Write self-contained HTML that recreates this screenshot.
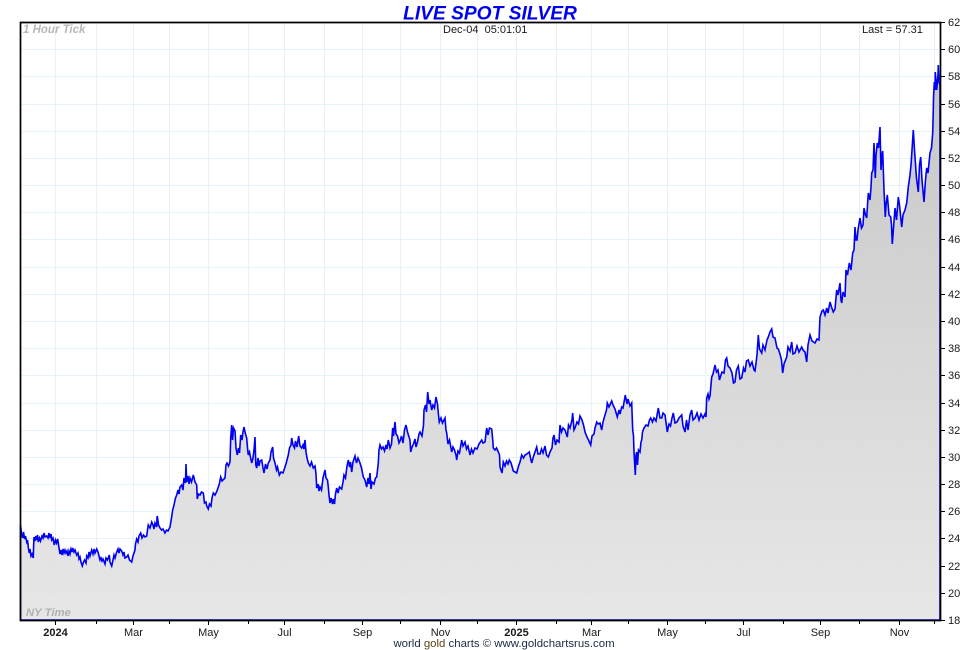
<!DOCTYPE html>
<html><head><meta charset="utf-8"><title>Live Spot Silver</title>
<style>
html,body{margin:0;padding:0;background:#fff}
svg{display:block}
text{font-family:"Liberation Sans",sans-serif;font-size:11px;fill:#1a1a1a}
.y text{text-anchor:start}
.x text{text-anchor:middle}
</style></head><body>
<svg width="980" height="650" viewBox="0 0 980 650" xmlns="http://www.w3.org/2000/svg">
<defs>
<linearGradient id="g" gradientUnits="userSpaceOnUse" x1="0" y1="60" x2="0" y2="620">
<stop offset="0" stop-color="#c2c2c2"/><stop offset=".5" stop-color="#d4d4d4"/><stop offset="1" stop-color="#e5e5e5"/>
</linearGradient>
</defs>
<rect width="980" height="650" fill="#fff"/>
<g stroke="#e6f2fa" stroke-width="1" shape-rendering="crispEdges" fill="none">
<path d="M21 49.5H940M21 76.5H940M21 104.5H940M21 131.5H940M21 158.5H940M21 185.5H940M21 212.5H940M21 239.5H940M21 267.5H940M21 294.5H940M21 321.5H940M21 348.5H940M21 375.5H940M21 403.5H940M21 430.5H940M21 457.5H940M21 484.5H940M21 511.5H940M21 538.5H940M21 566.5H940M21 593.5H940"/>
<path d="M55.5 23V620M96.5 23V620M133.5 23V620M169.5 23V620M208.5 23V620M248.5 23V620M284.5 23V620M324.5 23V620M362.5 23V620M400.5 23V620M440.5 23V620M477.5 23V620M516.5 23V620M556.5 23V620M591.5 23V620M628.5 23V620M667.5 23V620M705.5 23V620M743.5 23V620M783.5 23V620M820.5 23V620M859.5 23V620M899.5 23V620M934.5 23V620"/>
</g>
<path fill="url(#g)" fill-opacity=".93" stroke="#0000f5" stroke-width="1.6" stroke-linejoin="miter" d="M20.5 620L20.5 525 21.5 533 22.7 538 23.5 532 24.6 539 25.5 536 26.7 542 27.5 540 28.4 548 29.3 553 30 549 31 556 32 554 33.3 558 33.6 546 34 537 35 541 36 536 36.7 540 37.5 535 38.3 542 39.5 538 40.5 541 42 536 43 538 44 533 45 537 46.7 536 48 538 49 533 50 538 51 534 51.7 540 53 538 54.3 545 55.5 540 56.5 543 57.7 539 59 548 60 554 61 550 62 555 63 549 64 553 65 550 66 553 67 551 68 556 69 551 70 554 71 549 72 552 72.7 548 74 552 75 550 76.7 555 78 553 79 559 80 557 81 562 82.3 566 83.5 562 84.5 560 86 563 86.7 556 88 558 89 552 90 556 91.7 550 93 554 94 549 95 553 96.7 549 98 552 99 556 100 560 101 558 102 561 103 559 105 564 106 558 107.5 560 109.3 555 110 562 111.7 566 113 560 114 555 115 558 116.7 552 118 549 119 553 120 549 121.7 551 123 555 124 552 125 558 126.7 557 128 555 129.5 560 131.7 562 133 556 135 550 135.5 544 136.7 539 138 542 139 536 140.7 533 142 538 143.5 535 145 537 146.7 536 147.5 530 148.3 525 150 528 151.7 522 153 525 154 529 155 523 156.7 527 157 518 157.3 516 158.5 525 160 528 161.5 530 163 529 165 533 166.5 530 168 531 170 527 171.5 518 172.7 510 174 505 175.5 498 176.7 495 178 490 179 494 180 487 181.7 485 183 490 184 478 185.5 483 186 464 186.7 482 188 476 189 484 190 478 191.5 482 193.3 475 195 482 196.7 485 197.3 499 198.5 494 200 495 201.5 492 203.3 493 204.5 503 206 502 206.7 506 208.3 509 209.5 504 211 506 212 498 213.3 493 215 495 216.5 492 218 488 219.3 484 220.7 477 222 481 224 479 225 478 226 465 227 463 228.5 466 230 462 230.7 438 231.7 425 232.5 440 233.5 428 235 431 236 448 237.3 455 238.5 448 239.5 453 240.7 435 242 440 243 432 244 427 245.5 434 246.7 438 247.5 448 248.3 455 249.5 452 251 460 251.7 463 253 458 254 450 255 437 255.8 465 256.7 468 258 458 259 466 260 461 261.7 460 263 468 264 473 265.5 464 267 469 268.3 463 270 460 271 452 272.7 447 273.5 458 275 463 276.5 470 277.5 467 279.3 475 281 472 283 473 285 467 286.5 462 288.3 455 289.5 448 291 445 291.7 438 293 445 294.5 448 295.5 441 297 447 298.7 436 300 446 301.7 448 303 445 304 449 305 440 306 452 307 458 308.3 463 310 466 311.5 462 313.3 468 315 466 316 474 316.7 488 318 484 319 491 320 487 321.5 490 323 478 325 470 326 478 327.5 480 328.3 487 329 495 330 503 331 498 332.5 504 333.3 499 334.5 504 335.5 494 336.7 488 338 493 339.5 487 341.7 489 343 482 344 475 345.5 478 347 466 348.3 460 349.5 467 350.5 462 351.7 472 353 462 355 456 356.5 463 358 458 360 463 361.5 468 363.3 477 365 480 366.7 487 368 478 369 484 370 473 371 489 372 482 374 484 375.5 478 376.7 477 377.5 470 378.3 463 379 450 380 445 381.5 449 383 447 384.5 451 386 445 387 449 388.3 440 390 448 391.5 444 392.7 428 393.5 436 395 422 396 434 397.5 436 399 443 400 441 401.5 436 403 443 404.5 430 406 425 407.5 432 409 437 410 440 410.7 452 412 447 413.5 444 415 439 416 447 417.5 442 419 434 420 432 422 436 423.5 425 424 410 425.5 405 426.5 412 427.7 392 429 404 430 400 431.7 410 433 405 434.5 408 436 397 437.5 404 438.5 415 439.3 422 441 418 442.5 423 445 418 446 430 446.7 433 448 444 449.5 440 451.7 452 453 447 454.5 450 456 455 456.7 460 458 451 459.5 453 461.7 440 463 446 465 442 466.5 449 468 446 470 455 471.5 449 473 453 475 448 477 449 479 444 481.7 440 483 443 485 442 486.7 428 488 435 489.5 428 491.7 429 493 443 493.3 448 495 450 496.5 448 498.3 452 499.5 455 500 467 501 470 502 473 503.3 462 505 466 506.5 461 508 464 509.3 460 511 463 512.5 468 513.3 471 515 472 516.7 473 518.5 466 520 462 521.7 455 523.5 458 525 455 527 454 529.3 452 530.5 458 531.7 463 533 458 535 452 536.7 447 538 454 540 454 541.5 449 543 453 545 446 546.5 455 548.3 457 550 452 552 448 553 438 554 435 555.5 445 557 440 559 442 560 425 561.5 432 563 428 565 430 567.3 437 568.5 425 570 428 572 420 572.7 413 574 430 575 428 577 422 578.5 424 580 416 582 420 583.5 425 585 432 587 437 588.5 440 590.7 445 592 436 594 434 595 428 596.7 422 598 424 600 423 601.7 430 603 422 605 415 606.5 410 607.3 403 609 407 611.7 401 613 405 615 409 617.3 417 619 410 620 414 621.7 407 623 408 625.3 395 627 404 628 399 630 406 631.7 403 632.7 430 633.5 436 634 452 635.3 475 636 455 636.7 452 637.5 465 638.5 450 640 452 641 442 641.7 440 642.5 432 644 428 646 425 648 426 649.5 420 650.7 418 652.5 422 654 418 656 421 658.3 408 660 418 661.7 418 663 413 665 415 667.3 432 669 424 670.5 426 672 418 673.3 413 675 423 677 422 679 418 681.7 415 683 426 685 432 686.5 420 688 430 690 415 691.7 410 693 420 695 418 697 413 699 420 701 414 703 418 705 414 706 417 706.7 398 708 394 709 399 710 396 711.7 377 713 374 715 365 716.5 372 718 370 719.5 380 720 378 722 372 724 373 725.5 360 726.7 358 728 366 730 368 732 373 733.5 383 735 382 736.5 370 738.3 366 740 379 741.7 378 743.5 368 745 372 746.5 361 748.3 360 750 366 752 362 754 370 755 371 757 355 758.3 335 759.5 349 761.7 353 763 345 765 350 767 340 768.3 337 770 332 771.7 329 773 337 775 338 777 348 778.3 349 780 354 781.5 360 782.7 373 784 364 786.7 357 788 347 790 351 791.7 342 793 354 795 353 797 346 799 352 801.7 347 803 350 805 352 806.7 362 808 345 810 335 812 341 815 343 817 339 819 340 820 317 822 311 823.3 310 825 315 826.7 308 828 313 830 302 831.5 307 833.3 312 835 309 836.7 290 838 295 840 283 841 300 841.7 303 843 292 845 297 846 270 847.5 275 849.3 263 851 270 852.7 253 854 250 855 227 856 240 857 240 858 230 860 218 861.5 228 863 225 864 208 865.5 215 866.7 218 867.5 205 868.3 193 870 200 871 187 871.7 173 873 170 874 143 875.3 178 876 155 877.3 143 878.5 148 880 127 881 170 882 155 882.7 151 884 190 885.3 217 886 205 887.3 195 889 215 890.7 217 891.5 225 892.3 244 893.5 228 895 208 896.5 220 898.3 197 899.5 205 901 220 901.7 227 903 215 905 210 906.7 203 908.3 187 910 175 911 165 912 150 913.3 130 914.5 150 915 157 916.5 178 918.3 192 919.5 165 920.7 157 922 180 924 202 925.5 180 926.7 168 928 173 930 153 931.5 148 932.7 133 933.3 110 933.5 98 934.3 82 935 90 935.3 72 936.7 90 938 75 938.3 65 939 82 940 85 940 620Z"/>
<g fill="none" stroke="#000" stroke-width="1" shape-rendering="crispEdges">
<path d="M940 22.5H945M940 49.5H945M940 76.5H945M940 104.5H945M940 131.5H945M940 158.5H945M940 185.5H945M940 212.5H945M940 239.5H945M940 267.5H945M940 294.5H945M940 321.5H945M940 348.5H945M940 375.5H945M940 403.5H945M940 430.5H945M940 457.5H945M940 484.5H945M940 511.5H945M940 538.5H945M940 566.5H945M940 593.5H945M940 620.5H945"/>
<path d="M55.5 620V625M96.5 620V624M133.5 620V625M169.5 620V624M208.5 620V625M248.5 620V624M284.5 620V625M324.5 620V624M362.5 620V625M400.5 620V624M440.5 620V625M477.5 620V624M516.5 620V625M556.5 620V624M591.5 620V625M628.5 620V624M667.5 620V625M705.5 620V624M743.5 620V625M783.5 620V624M820.5 620V625M859.5 620V624M899.5 620V625M934.5 620V624"/>
</g>
<path fill="none" stroke="#000" stroke-width="1.7" d="M20.5 620.5V22.5H940.5V620.5H20.5Z"/>
<text x="490" y="19.5" text-anchor="middle" style="font-size:19.2px;font-weight:bold;font-style:italic;fill:#0000f0">LIVE SPOT SILVER</text>
<text x="443" y="33" style="white-space:pre">Dec-04  05:01:01</text>
<text x="862" y="33">Last = 57.31</text>
<text x="23" y="33" style="font-size:11.5px;font-weight:bold;font-style:italic;fill:#b8b8b8">1 Hour Tick</text>
<text x="26" y="616" style="font-size:11.3px;font-weight:bold;font-style:italic;fill:#b0b0b0">NY Time</text>
<g class="y">
<text x="948" y="26">62</text><text x="948" y="53">60</text><text x="948" y="80">58</text><text x="948" y="108">56</text><text x="948" y="135">54</text><text x="948" y="162">52</text><text x="948" y="189">50</text><text x="948" y="216">48</text><text x="948" y="243">46</text><text x="948" y="271">44</text><text x="948" y="298">42</text><text x="948" y="325">40</text><text x="948" y="352">38</text><text x="948" y="379">36</text><text x="948" y="407">34</text><text x="948" y="434">32</text><text x="948" y="461">30</text><text x="948" y="488">28</text><text x="948" y="515">26</text><text x="948" y="542">24</text><text x="948" y="570">22</text><text x="948" y="597">20</text><text x="948" y="624">18</text>
</g>
<g class="x">
<text x="55.5" y="636" font-weight="bold">2024</text><text x="133.5" y="636">Mar</text><text x="208.5" y="636">May</text><text x="284.5" y="636">Jul</text><text x="362.5" y="636">Sep</text><text x="440.5" y="636">Nov</text><text x="516.5" y="636" font-weight="bold">2025</text><text x="591.5" y="636">Mar</text><text x="667.5" y="636">May</text><text x="743.5" y="636">Jul</text><text x="820.5" y="636">Sep</text><text x="899.5" y="636">Nov</text>
</g>
<text x="504" y="647" text-anchor="middle" style="font-size:11.4px;fill:#1a2a44">world <tspan style="fill:#5a4410">gold</tspan> charts © www.goldchartsrus.com</text>
</svg>
</body></html>
